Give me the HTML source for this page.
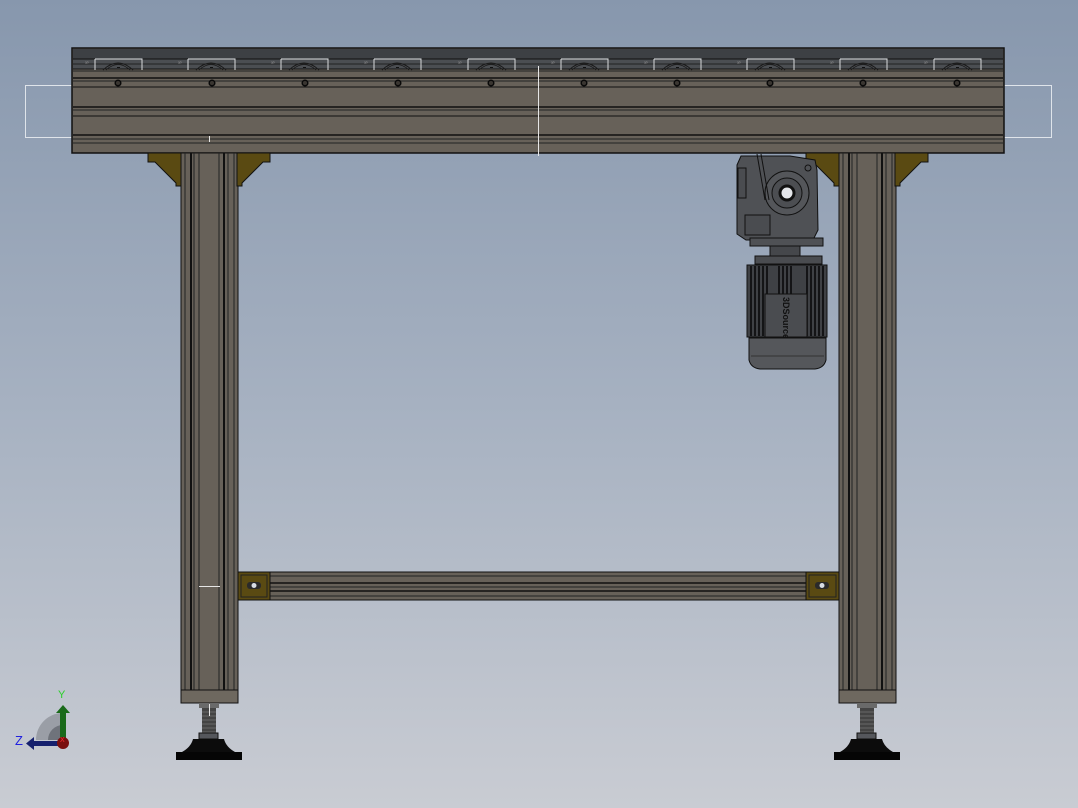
<!DOCTYPE html>
<html><head><meta charset="utf-8"><style>
html,body{margin:0;padding:0;width:1078px;height:808px;overflow:hidden}
svg{display:block}
</style></head><body>
<svg width="1078" height="808" viewBox="0 0 1078 808" xmlns="http://www.w3.org/2000/svg">
<defs>
<linearGradient id="bg" x1="0" y1="0" x2="0" y2="1">
<stop offset="0" stop-color="#8797ad"/><stop offset="0.5" stop-color="#a6b1c1"/><stop offset="1" stop-color="#c9ccd3"/>
</linearGradient>
<g id="roller">
<path d="M0 0 H47 V11" fill="none" stroke="#d8dadc" stroke-width="1"/>
<path d="M0 0 V11" fill="none" stroke="#d8dadc" stroke-width="1"/>
<path d="M8 11 Q23 -3 38 11" fill="none" stroke="#1a1a1a" stroke-width="1"/>
<path d="M11 11 Q23 0 35 11" fill="none" stroke="#1a1a1a" stroke-width="0.8"/>
<rect x="22" y="8" width="3" height="1" fill="#111"/>
<text x="-10" y="6" font-family="Liberation Sans, sans-serif" font-size="5" fill="#999">³⁰</text>
</g>
<g id="legdetail">
<rect x="0" y="0" width="57" height="550" fill="#676159" stroke="#111" stroke-width="1"/>
<line x1="4" y1="0" x2="4" y2="537" stroke="#222"/>
<line x1="10" y1="0" x2="10" y2="537" stroke="#111" stroke-width="2"/>
<line x1="13" y1="0" x2="13" y2="537" stroke="#222"/>
<line x1="18" y1="0" x2="18" y2="537" stroke="#222"/>
<line x1="38" y1="0" x2="38" y2="537" stroke="#222"/>
<line x1="43" y1="0" x2="43" y2="537" stroke="#111" stroke-width="2"/>
<line x1="47" y1="0" x2="47" y2="537" stroke="#222"/>
<line x1="53" y1="0" x2="53" y2="537" stroke="#222"/>
<line x1="0" y1="537" x2="57" y2="537" stroke="#111"/>
<rect x="0" y="537" width="57" height="13" fill="#6e685f" stroke="#111"/>
</g>
<g id="foot">
<rect x="-10" y="0" width="20" height="5" fill="#6a6a6a"/>
<rect x="-7" y="5" width="14" height="30" fill="#444"/>
<g stroke="#777" stroke-width="0.7">
<line x1="-7" y1="9" x2="7" y2="9"/><line x1="-7" y1="13" x2="7" y2="13"/><line x1="-7" y1="17" x2="7" y2="17"/><line x1="-7" y1="21" x2="7" y2="21"/><line x1="-7" y1="25" x2="7" y2="25"/><line x1="-7" y1="29" x2="7" y2="29"/></g>
<rect x="-10" y="30" width="19" height="6" fill="#55575c" stroke="#111"/>
<path d="M-16 36 H15 Q17 44 26 49 H-27 Q-18 44 -16 36Z" fill="#0c0c0c"/>
<rect x="-33" y="49" width="66" height="8" fill="#050505"/>
</g>
<g id="bracketL">
<path d="M0 0 H33 V33 H28 V30 L7 9 H0 Z" fill="#5a4a12" stroke="#111"/>
</g>
</defs>
<rect width="1078" height="808" fill="url(#bg)"/>

<!-- overlay light rect -->
<rect x="25.5" y="85.5" width="1026" height="52" fill="none" stroke="#dfe4ea" stroke-width="1"/>

<!-- top beam -->
<rect x="72" y="48" width="932" height="105" fill="#676159" stroke="#111" stroke-width="1.5"/>
<rect x="73" y="49" width="930" height="10" fill="#3d4044"/>
<rect x="73" y="59" width="930" height="10" fill="#4b4e52"/>
<line x1="73" y1="59" x2="1003" y2="59" stroke="#111"/>
<line x1="73" y1="64" x2="1003" y2="64" stroke="#222"/>
<line x1="73" y1="69" x2="1003" y2="69" stroke="#111"/>
<line x1="73" y1="71" x2="1003" y2="71" stroke="#222"/>
<line x1="73" y1="78" x2="1003" y2="78" stroke="#111" stroke-width="1.5"/>
<line x1="73" y1="81" x2="1003" y2="81" stroke="#222"/>
<line x1="73" y1="87" x2="1003" y2="87" stroke="#111"/>
<line x1="73" y1="107" x2="1003" y2="107" stroke="#111" stroke-width="1.5"/>
<line x1="73" y1="110" x2="1003" y2="110" stroke="#222"/>
<line x1="73" y1="116" x2="1003" y2="116" stroke="#111"/>
<line x1="73" y1="135" x2="1003" y2="135" stroke="#111" stroke-width="1.5"/>
<line x1="73" y1="139" x2="1003" y2="139" stroke="#222"/>
<line x1="73" y1="143" x2="1003" y2="143" stroke="#222"/>
<g>
<use href="#roller" x="95" y="59"/><use href="#roller" x="188" y="59"/><use href="#roller" x="281" y="59"/><use href="#roller" x="374" y="59"/><use href="#roller" x="468" y="59"/><use href="#roller" x="561" y="59"/><use href="#roller" x="654" y="59"/><use href="#roller" x="747" y="59"/><use href="#roller" x="840" y="59"/><use href="#roller" x="934" y="59"/>
</g>
<g fill="#3a3631" stroke="#0a0a0a" stroke-width="1.5">
<circle cx="118" cy="83" r="2.8"/><circle cx="212" cy="83" r="2.8"/><circle cx="305" cy="83" r="2.8"/><circle cx="398" cy="83" r="2.8"/><circle cx="491" cy="83" r="2.8"/><circle cx="584" cy="83" r="2.8"/><circle cx="677" cy="83" r="2.8"/><circle cx="770" cy="83" r="2.8"/><circle cx="863" cy="83" r="2.8"/><circle cx="957" cy="83" r="2.8"/>
</g>
<line x1="538.5" y1="66" x2="538.5" y2="156" stroke="#e6e6e6" stroke-width="1"/>
<line x1="209.5" y1="136" x2="209.5" y2="142" stroke="#e6e6e6"/>

<!-- legs -->
<use href="#legdetail" x="181" y="153"/>
<use href="#legdetail" x="839" y="153"/>
<line x1="199" y1="586.5" x2="220" y2="586.5" stroke="#e6e6e6"/>

<!-- brackets -->
<use href="#bracketL" x="148" y="153"/>
<g transform="translate(270 153) scale(-1 1)"><use href="#bracketL"/></g>
<use href="#bracketL" x="806" y="153"/>
<g transform="translate(928 153) scale(-1 1)"><use href="#bracketL"/></g>

<!-- cross beam -->
<rect x="238" y="572" width="601" height="28" fill="#676159" stroke="#111"/>
<line x1="238" y1="576" x2="839" y2="576" stroke="#222"/>
<line x1="238" y1="583" x2="839" y2="583" stroke="#111" stroke-width="1.5"/>
<line x1="238" y1="587" x2="839" y2="587" stroke="#222"/>
<line x1="238" y1="591" x2="839" y2="591" stroke="#111" stroke-width="1.5"/>
<line x1="238" y1="596" x2="839" y2="596" stroke="#222"/>
<g>
<rect x="238" y="572" width="32" height="28" fill="#5a4a12" stroke="#111"/>
<rect x="241" y="575" width="26" height="22" fill="none" stroke="#222"/>
<rect x="247" y="582" width="14" height="7" rx="3" fill="#2a2a2a"/><circle cx="254" cy="585.5" r="2.5" fill="#d8dde4"/>
<rect x="806" y="572" width="33" height="28" fill="#5a4a12" stroke="#111"/>
<rect x="809" y="575" width="27" height="22" fill="none" stroke="#222"/>
<rect x="815" y="582" width="14" height="7" rx="3" fill="#2a2a2a"/><circle cx="822" cy="585.5" r="2.5" fill="#d8dde4"/>
</g>

<!-- feet -->
<use href="#foot" x="209" y="703"/>
<use href="#foot" x="867" y="703"/>
<line x1="209.5" y1="704" x2="209.5" y2="716" stroke="#e6e6e6"/>

<!-- gearbox -->
<g stroke="#111" stroke-width="1">
<path d="M741 156 H790 L815 160 L817 170 L818 230 L813 240 H746 L737 234 V165 Z" fill="#4f5155"/>
<rect x="738" y="168" width="8" height="30" fill="#4a4c50"/>
<rect x="745" y="215" width="25" height="20" fill="#4a4c50"/>
<circle cx="787" cy="193" r="22" fill="#54565a"/>
<circle cx="787" cy="193" r="15" fill="#4c4e52"/>
<circle cx="787" cy="193" r="7" fill="#e4e6ea" stroke="#111" stroke-width="3"/>
<path d="M757 154 L765 200" fill="none"/><path d="M761 154 L769 200" fill="none"/>
<circle cx="808" cy="168" r="3" fill="none"/>
<rect x="750" y="238" width="73" height="8" fill="#4f5155"/>
<rect x="770" y="246" width="30" height="10" fill="#45474b"/>
<rect x="755" y="256" width="67" height="8" fill="#4a4c50"/>
<rect x="747" y="265" width="80" height="72" fill="#3f4145"/>
</g>
<g stroke="#0a0a0a" stroke-width="1.6">
<line x1="751" y1="266" x2="751" y2="336"/><line x1="755" y1="266" x2="755" y2="336"/><line x1="759" y1="266" x2="759" y2="336"/><line x1="763" y1="266" x2="763" y2="336"/><line x1="767" y1="266" x2="767" y2="336"/><line x1="779" y1="266" x2="779" y2="300"/><line x1="783" y1="266" x2="783" y2="300"/><line x1="787" y1="266" x2="787" y2="300"/><line x1="791" y1="266" x2="791" y2="300"/><line x1="807" y1="266" x2="807" y2="336"/><line x1="811" y1="266" x2="811" y2="336"/><line x1="815" y1="266" x2="815" y2="336"/><line x1="819" y1="266" x2="819" y2="336"/><line x1="823" y1="266" x2="823" y2="336"/>
</g>
<rect x="765" y="294" width="42" height="43" fill="#4a4c50" stroke="#111"/>
<text transform="translate(783 297) rotate(90)" font-family="Liberation Sans, sans-serif" font-size="9" font-weight="bold" fill="#111">3DSource</text>
<path d="M749 338 H826 V360 Q824 368 815 369 H760 Q751 368 749 360 Z" fill="#55575b" stroke="#111"/>
<line x1="751" y1="356" x2="824" y2="356" stroke="#333"/>

<!-- axis triad -->
<path d="M36 740 A27 27 0 0 1 63 713 V740 Z" fill="#9a9ea6"/>
<path d="M48 740 A15 15 0 0 1 63 725 V740 Z" fill="#6f737b"/>
<rect x="60" y="712" width="6" height="28" fill="#1a6a1a"/>
<path d="M56 713 L63 705 L70 713 Z" fill="#1a6a1a"/>
<rect x="33" y="741" width="28" height="5" fill="#15206e"/>
<path d="M34 737 L26 743.5 L34 750 Z" fill="#15206e"/>
<circle cx="63" cy="743" r="6" fill="#7a0e0e"/>
<text x="58" y="698" font-family="Liberation Sans, sans-serif" font-size="11" fill="#2ad02a">Y</text>
<text x="15" y="745" font-family="Liberation Sans, sans-serif" font-size="13" fill="#2020e0">Z</text>
<text x="60" y="742" font-family="Liberation Sans, sans-serif" font-size="7" fill="#ff3030">X</text>
</svg>
</body></html>
